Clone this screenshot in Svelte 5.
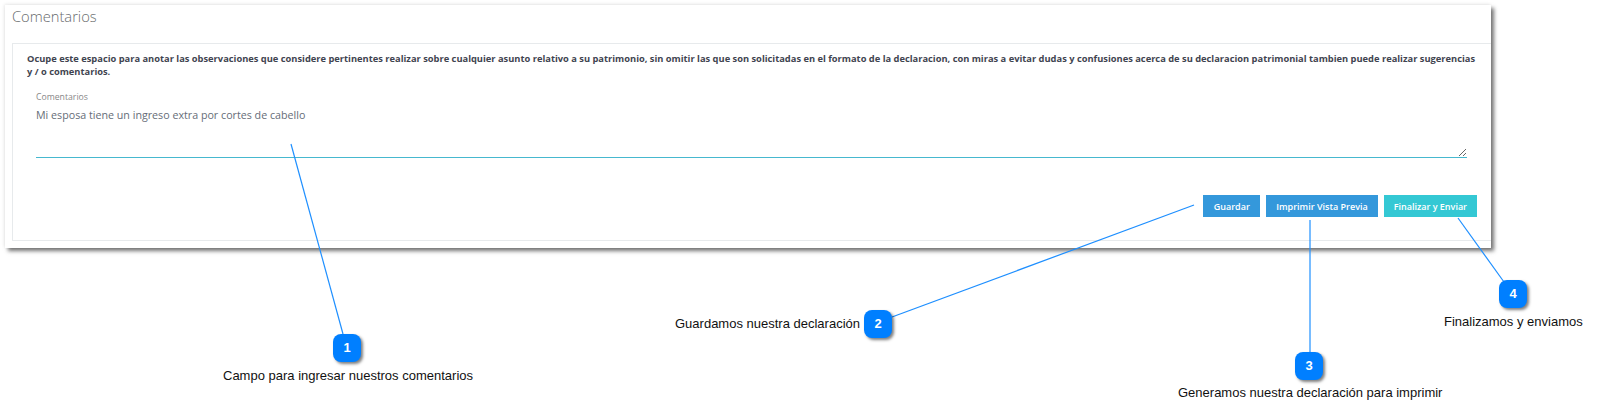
<script>
	const steps = [
		{ n: 1, x: 333, y: 334, text: 'Campo para ingresar nuestros comentarios', tx: 223, ty: 368 },
		{ n: 2, x: 864, y: 310, text: 'Guardamos nuestra declaración', tx: 675, ty: 316 },
		{ n: 3, x: 1295, y: 352, text: 'Generamos nuestra declaración para imprimir', tx: 1178, ty: 385 },
		{ n: 4, x: 1499, y: 280, text: 'Finalizamos y enviamos', tx: 1444, ty: 314 }
	];

	const lines = [
		[291, 144, 343, 334],
		[1194, 205, 892, 317],
		[1310, 220, 1310, 352],
		[1458, 218, 1504, 282]
	];
</script>

<main class="page">
	<section class="shot">
		<h2>Comentarios</h2>
		<div class="box">
			<p class="intro">
				Ocupe este espacio para anotar las observaciones que considere pertinentes realizar sobre cualquier asunto relativo a su patrimonio, sin omitir las que son solicitadas en el formato de la declaracion, con miras a evitar dudas y confusiones acerca de su declaracion patrimonial tambien puede realizar sugerencias y / o comentarios.
			</p>
			<div class="field">
				<span class="label">Comentarios</span>
				<textarea readonly>Mi esposa tiene un ingreso extra por cortes de cabello</textarea>
			</div>
			<div class="actions">
				<button type="button">Guardar</button>
				<button type="button">Imprimir Vista Previa</button>
				<button type="button" class="send">Finalizar y Enviar</button>
			</div>
		</div>
	</section>

	<svg class="lines" width="1599" height="417" viewBox="0 0 1599 417">
		{#each lines as l}
			<line x1={l[0]} y1={l[1]} x2={l[2]} y2={l[3]} />
		{/each}
	</svg>

	{#each steps as s}
		<div class="badge" style="left: {s.x}px; top: {s.y}px;">{s.n}</div>
		<div class="note" style="left: {s.tx}px; top: {s.ty}px;">{s.text}</div>
	{/each}
</main>

<style>
	:global(body) {
		margin: 0;
		background: #fff;
	}
	.page {
		position: relative;
		width: 1599px;
		height: 417px;
		overflow: hidden;
		padding: 5px 0 0 5px;
		box-sizing: border-box;
	}
	.shot {
		width: 1486px;
		height: 243px;
		box-sizing: border-box;
		padding: 0 0 7px 7px;
		display: flex;
		flex-direction: column;
		background: #fff;
		box-shadow: 3px 3px 4px rgba(0, 0, 0, 0.55), -1px -1px 3px rgba(0, 0, 0, 0.08);
		font-family: 'Open Sans', sans-serif;
	}
	h2 {
		margin: 0;
		height: 38px;
		box-sizing: border-box;
		font-size: 14.7px;
		line-height: 22px;
		font-weight: 300;
		color: #676a6c;
	}
	.box {
		flex: 1;
		box-sizing: border-box;
		border: 1px solid #e7eaec;
		border-right: none;
		padding: 8px 14px 0 14px;
		display: flex;
		flex-direction: column;
	}
	.intro {
		margin: 0 -2px 0 0;
		font-size: 9.32px;
		line-height: 13px;
		font-weight: 700;
		color: #3f4450;
	}
	.field {
		margin: 13px 10px 0 9px;
		display: flex;
		flex-direction: column;
	}
	.label {
		font-size: 8.7px;
		line-height: 12px;
		color: #888;
	}
	textarea {
		display: block;
		height: 55px;
		box-sizing: border-box;
		margin: 0;
		padding: 4px 0 0;
		border: none;
		border-bottom: 1px solid #46b8cf;
		outline: none;
		background: transparent;
		resize: vertical;
		font-family: inherit;
		font-size: 10.7px;
		line-height: 16px;
		color: #666d78;
	}
	.actions {
		margin-top: 37px;
		display: flex;
		justify-content: flex-end;
		gap: 6px;
	}
	button {
		min-width: 57px;
		height: 22px;
		padding: 0 10px;
		border: none;
		background: #3498db;
		color: #fff;
		font-family: 'Open Sans', sans-serif;
		font-size: 9px;
		font-weight: 600;
	}
	button.send {
		background: #34c8d4;
	}
	.lines {
		position: absolute;
		left: 0;
		top: 0;
		pointer-events: none;
	}
	.lines line {
		stroke: #1e8fff;
		stroke-width: 1.2;
	}
	.badge {
		position: absolute;
		width: 28px;
		height: 28px;
		border-radius: 8px;
		background: #007fff;
		box-shadow: 2px 2px 3px rgba(0, 0, 0, 0.5);
		color: #fff;
		font-family: 'Liberation Sans', Arial, sans-serif;
		font-size: 13px;
		font-weight: 700;
		line-height: 28px;
		text-align: center;
	}
	.note {
		position: absolute;
		white-space: nowrap;
		font-family: 'Liberation Sans', Arial, sans-serif;
		font-size: 13px;
		line-height: 16px;
		color: #111;
	}
</style>
